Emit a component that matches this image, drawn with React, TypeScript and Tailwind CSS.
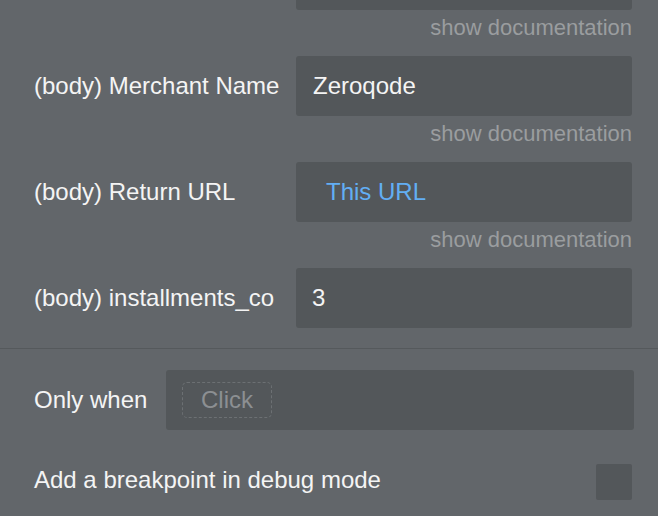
const FONT = { fontFamily: '"Liberation Sans", Arial, sans-serif' }

function ShowDoc() {
  return (
    <div className="flex h-[46px] justify-end pr-[26px] pt-[4px]">
      <span className="text-[22px] leading-[28px] text-[#9a9d9f]">show documentation</span>
    </div>
  )
}

function FieldRow({ label, children }: { label: string; children: React.ReactNode }) {
  return (
    <div className="flex h-[60px] items-center pl-[34px] pr-[26px]">
      <div className="w-[262px] shrink-0 whitespace-nowrap text-[24px] text-[#f4f4f4]">{label}</div>
      <div className="flex h-full flex-1 items-center rounded-[3px] bg-[#53575a] text-[24px]">{children}</div>
    </div>
  )
}

export default function App() {
  return (
    <div className="h-[516px] w-[658px] overflow-hidden bg-[#62666a]" style={FONT}>
      {/* partially visible input from the row above */}
      <div className="-mt-[50px] flex h-[60px] pl-[296px] pr-[26px]">
        <div className="flex-1 rounded-[3px] bg-[#53575a]" />
      </div>
      <ShowDoc />

      <FieldRow label="(body) Merchant Name">
        <span className="pl-[17px] text-[#f4f4f4]">Zeroqode</span>
      </FieldRow>
      <ShowDoc />

      <FieldRow label="(body) Return URL">
        <span className="pl-[30px] text-[#62aef4]">This URL</span>
      </FieldRow>
      <ShowDoc />

      <FieldRow label="(body) installments_co">
        <span className="pl-[16px] text-[#f4f4f4]">3</span>
      </FieldRow>

      <div className="mt-[20px] border-t border-[#55595c]" />

      <div className="mt-[21px] flex h-[60px] items-center pl-[34px] pr-[24px]">
        <div className="w-[132px] shrink-0 text-[24px] text-[#f4f4f4]">Only when</div>
        <div className="flex h-full flex-1 items-center rounded-[3px] bg-[#53575a] pl-[16px]">
          <div className="flex h-[36px] items-center rounded-[5px] border border-dashed border-[#6c7073] px-[18px] text-[24px] text-[#8c8f92]">
            Click
          </div>
        </div>
      </div>

      <div className="mt-[34px] flex items-start pl-[34px] pr-[26px]">
        <div className="flex-1 text-[24px] leading-[32px] text-[#f4f4f4]">Add a breakpoint in debug mode</div>
        <div className="h-[36px] w-[36px] rounded-[2px] bg-[#53575a]" />
      </div>
    </div>
  )
}
